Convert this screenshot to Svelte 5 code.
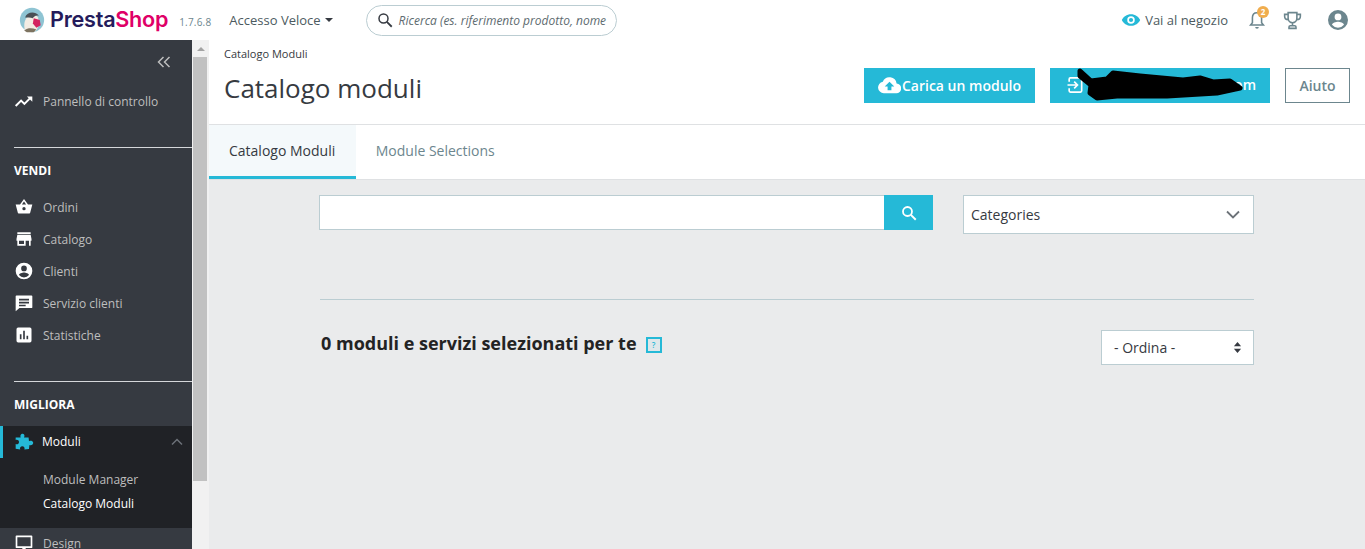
<script>
  const vendi = [
    { label: 'Ordini', icon: 'M12 2.500 7.200 9H2l2.600 10a1 1 0 0 0 1 .8h12.800a1 1 0 0 0 1-.8L22 9h-5.200zM9.500 9 12 5.300 14.500 9zM12 16a2 2 0 1 1 0-4 2 2 0 0 1 0 4z' },
    { label: 'Catalogo', icon: 'M4 4h16v2H4zM3 14v-2l1-5h16l1 5v2h-1v6H4v-6zm3 0v4h6v-4zm8 0v6h4v-6z' },
    { label: 'Clienti', icon: 'M12 2a10 10 0 1 0 0 20 10 10 0 0 0 0-20zm0 3.500a3.400 3.400 0 1 1 0 6.800 3.400 3.400 0 0 1 0-6.800zm0 14.200a7.700 7.700 0 0 1-6-2.900c.1-2 4-3.100 6-3.100s5.900 1.100 6 3.100a7.700 7.700 0 0 1-6 2.900z' },
    { label: 'Servizio clienti', icon: 'M3 3h18a1 1 0 0 1 1 1v13a1 1 0 0 1-1 1H6.500L2 22V4a1 1 0 0 1 1-1zm3 4v2h12V7zm0 3.500v2h12v-2zM6 14v2h8v-2z' },
    { label: 'Statistiche', icon: 'M5 3h14a2 2 0 0 1 2 2v14a2 2 0 0 1-2 2H5a2 2 0 0 1-2-2V5a2 2 0 0 1 2-2zm2 8v6h2v-6zm4-4v10h2V7zm4 6v4h2v-4z' }
  ];
</script>

<div class="page">
  <header class="topbar">
    <div class="logo">
      <svg class="bird" viewBox="0 0 30 30" width="26" height="26" aria-hidden="true">
        <circle cx="15" cy="15" r="14" fill="#8fc4d3" />
        <path d="M7 28c-2-8-1-15 5-18 4-2 8-1 10 2l1 6c0 4-2 8-4 10z" fill="#f3ece3" />
        <path d="M7 12c2-6 11-8 16-2-4-1-6 1-7 3-3-1-6-1-9-1z" fill="#4a4f55" />
        <path d="M17 13l7 2 1 6-5 3-4-5z" fill="#d3235f" />
        <path d="M6 27c4-3 9-3 14-1l-3 3h-8z" fill="#7d7360" />
      </svg>
      <span class="wordmark"><span class="presta">Presta</span><span class="shop">Shop</span></span>
    </div>
    <span class="version">1.7.6.8</span>
    <span class="quick">Accesso Veloce <i class="caret"></i></span>
    <div class="search">
      <svg viewBox="0 0 24 24" width="18" height="18" aria-hidden="true"><circle cx="10" cy="10" r="6" fill="none" stroke="#363a41" stroke-width="2" /><path d="M14.500 14.500 21 21" stroke="#363a41" stroke-width="2.400" /></svg>
      <span class="search-text">Ricerca (es. riferimento prodotto, nome</span>
    </div>
    <div class="top-right">
      <svg class="eye" viewBox="0 0 24 24" width="20" height="20" aria-hidden="true"><path fill="#25b9d7" d="M12 5C7 5 2.700 8.100 1 12c1.700 3.900 6 7 11 7s9.300-3.100 11-7c-1.700-3.900-6-7-11-7zm0 11.500a4.500 4.500 0 1 1 0-9 4.500 4.500 0 0 1 0 9zm0-7a2.500 2.500 0 1 0 0 5 2.500 2.500 0 0 0 0-5z" /></svg>
      <span class="shop-link">Vai al negozio</span>
      <span class="bell">
        <svg viewBox="0 0 24 24" width="22" height="22" aria-hidden="true"><path fill="none" stroke="#6c868e" stroke-width="1.700" d="M12 4c-3.400 0-5 2.600-5 5.500V15l-2 2.500h14L17 15V9.500C17 6.600 15.400 4 12 4z" /><path fill="#6c868e" d="M10 19.500h4a2 2 0 0 1-4 0z" /></svg>
        <span class="badge">2</span>
      </span>
      <svg class="trophy" viewBox="0 0 24 24" width="21" height="21" aria-hidden="true"><path fill="none" stroke="#6c868e" stroke-width="1.800" d="M7 3h10v6.500a5 5 0 0 1-10 0zM7 5H3v2c0 2.500 1.800 4 4.300 4.200M17 5h4v2c0 2.500-1.800 4-4.300 4.200M12 14.500V18M8 21v-1.500a1.500 1.500 0 0 1 1.500-1.500h5a1.500 1.500 0 0 1 1.500 1.500V21z" /></svg>
      <svg class="user" viewBox="0 0 24 24" width="24" height="24" aria-hidden="true"><path fill="#6c868e" d="M12 2a10 10 0 1 0 0 20 10 10 0 0 0 0-20zm0 3.500a3.400 3.400 0 1 1 0 6.800 3.400 3.400 0 0 1 0-6.800zm0 14.200a7.700 7.700 0 0 1-6-2.900c.1-2 4-3.100 6-3.100s5.900 1.100 6 3.100a7.700 7.700 0 0 1-6 2.900z" /></svg>
    </div>
  </header>

  <div class="body">
    <nav class="sidebar">
      <div class="collapse">
        <svg viewBox="0 0 14 12" width="14" height="12" aria-hidden="true"><path d="M6.500 1 1.500 6l5 5M12.500 1l-5 5 5 5" fill="none" stroke="#bebebe" stroke-width="1.500" /></svg>
      </div>
      <div class="item dash">
        <svg viewBox="0 0 24 24" width="20" height="20" aria-hidden="true"><path d="M2 18l6.500-6.500 4 4L20 8" fill="none" stroke="#fff" stroke-width="2.400" /><path d="M15.500 6.500H22V13z" fill="#fff" /></svg>
        <span>Pannello di controllo</span>
      </div>
      <div class="rule first"></div>
      <div class="heading">VENDI</div>
      {#each vendi as v}
        <div class="item">
          <svg viewBox="0 0 24 24" width="20" height="20" aria-hidden="true"><path fill="#fff" fill-rule="evenodd" d={v.icon} /></svg>
          <span>{v.label}</span>
        </div>
      {/each}
      <div class="rule second"></div>
      <div class="heading">MIGLIORA</div>
      <div class="active">
        <div class="active-row">
          <svg viewBox="0 0 24 24" width="20" height="20" aria-hidden="true"><path fill="#25b9d7" d="M9 2.500c2-1 4 .5 3.500 2.500-.1.500-.5 1-.5 1.500h5.500l.5 4.500c1.800-1 4.500-.5 5 1.500.5 2.500-2.500 4-4.500 3l-.5 5-5.500.5c.8-2-.5-4-2.500-4s-3.500 2-2.500 4L2 20v-5.500c2 1 4-.5 4-2.500s-2-3-4-2.500V6.500h6C7.500 5 7.500 3.300 9 2.500z" /></svg>
          <span class="mod">Moduli</span>
          <svg class="up" viewBox="0 0 12 8" width="12" height="8" aria-hidden="true"><path d="M1 6.500l5-5 5 5" fill="none" stroke="#6c7278" stroke-width="1.500" /></svg>
        </div>
        <div class="sub">Module Manager</div>
        <div class="sub on">Catalogo Moduli</div>
      </div>
      <div class="item design">
        <svg viewBox="0 0 24 24" width="20" height="20" aria-hidden="true"><path fill="#fff" fill-rule="evenodd" d="M3 3h18a1 1 0 0 1 1 1v13a1 1 0 0 1-1 1h-7v2h2v2H8v-2h2v-2H3a1 1 0 0 1-1-1V4a1 1 0 0 1 1-1zm1 2v11h16V5z" /></svg>
        <span>Design</span>
      </div>
    </nav>

    <div class="scrollbar">
      <i class="arrow"></i>
      <div class="thumb"></div>
    </div>

    <main class="main">
      <section class="head">
        <div class="crumb">Catalogo Moduli</div>
        <div class="title-row">
          <h1>Catalogo moduli</h1>
          <div class="actions">
            <button class="btn upload">
              <svg viewBox="0 0 24 24" width="23" height="23" aria-hidden="true"><path fill="#fff" fill-rule="evenodd" d="M19.400 10A7.500 7.500 0 0 0 5 8.100 6 6 0 0 0 6 20h13a5 5 0 0 0 .4-10zM14 13v4h-4v-4H7l5-5 5 5z" /></svg>
              Carica un modulo
            </button>
            <button class="btn connect">
              <svg viewBox="0 0 24 24" width="20" height="20" aria-hidden="true"><path fill="none" stroke="#fff" stroke-width="2" d="M5 8V5a1.500 1.500 0 0 1 1.500-1.500h12A1.500 1.500 0 0 1 20 5v14a1.500 1.500 0 0 1-1.500 1.500h-12A1.500 1.500 0 0 1 5 19v-3M3 12h11M11 8l4 4-4 4" /></svg>
              <span class="tail">om</span>
              <svg class="scribble" viewBox="0 0 170 36" width="170" height="36" aria-hidden="true"><path d="M3 3 14 13 30 11 36 5 63 8 106 12 123 10 136 14 153 13 163 20 140 25 90 28 40 28 20 30 13 25 14 17 3 8z" fill="#000" stroke="#000" stroke-width="5" stroke-linejoin="round" /></svg>
            </button>
            <button class="btn help">Aiuto</button>
          </div>
        </div>
      </section>

      <div class="tabs">
        <div class="tab current">Catalogo Moduli</div>
        <div class="tab">Module Selections</div>
      </div>

      <section class="content">
        <div class="filters">
          <div class="searchbox">
            <div class="field"></div>
            <div class="go">
              <svg viewBox="0 0 24 24" width="18" height="18" aria-hidden="true"><circle cx="10" cy="10" r="6" fill="none" stroke="#fff" stroke-width="2.400" /><path d="M14.500 14.500 21 21" stroke="#fff" stroke-width="2.600" /></svg>
            </div>
          </div>
          <div class="cat">
            <span>Categories</span>
            <svg viewBox="0 0 14 9" width="14" height="9" aria-hidden="true"><path d="M1 1.500l6 6 6-6" fill="none" stroke="#6c7278" stroke-width="1.800" /></svg>
          </div>
        </div>
        <div class="divider"></div>
        <div class="results">
          <h2>0 moduli e servizi selezionati per te</h2>
          <span class="qm">?</span>
          <div class="sort">
            <span>- Ordina -</span>
            <svg viewBox="0 0 10 14" width="9" height="13" aria-hidden="true"><path d="M5 1l4 4.500H1zM5 13 1 8.500h8z" fill="#363a41" /></svg>
          </div>
        </div>
      </section>
    </main>
  </div>
</div>

<style>
  :global(body) { margin: 0; overflow: hidden; background: #fff; }
  .page { height: 549px; width: 1365px; overflow: hidden; font-family: "Open Sans", sans-serif; color: #363a41; display: flex; flex-direction: column; }
  .topbar { height: 40px; flex: none; display: flex; align-items: center; background: #fff; }
  .logo { display: flex; align-items: center; margin-left: 19px; }
  .bird { margin-right: 5px; }
  .wordmark { font-family: Inter, sans-serif; font-weight: 600; font-size: 21.600px; letter-spacing: -.25px; line-height: 1; }
  .presta { color: #251b5b; }
  .shop { color: #df0067; }
  .version { font-size: 10px; color: #6c868e; margin-left: 11px; margin-top: 3px; letter-spacing: .2px; }
  .quick { font-size: 13px; color: #4c5a60; margin-left: 18px; display: flex; align-items: center; gap: 4px; }
  .caret { width: 0; height: 0; border: 4.500px solid transparent; border-top-color: #363a41; border-bottom: 0; }
  .search { margin-left: 33px; width: 251px; height: 31px; box-sizing: border-box; border: 1px solid #bbcdd2; border-radius: 16px; display: flex; align-items: center; padding-left: 9px; gap: 5px; overflow: hidden; }
  .search-text { font-size: 12px; font-style: italic; color: #5e6b70; white-space: nowrap; }
  .top-right { margin-left: auto; display: flex; align-items: center; position: relative; padding-right: 15px; }
  .shop-link { font-size: 13px; color: #4c5a60; margin-left: 4px; }
  .bell { position: relative; display: flex; margin-left: 18px; }
  .badge { position: absolute; left: 11px; top: -3px; width: 12px; height: 12px; border-radius: 50%; background: #f0ad4e; color: #fff; font-size: 8px; font-weight: 700; line-height: 12px; text-align: center; }
  .trophy { margin-left: 14px; }
  .user { margin-left: 23px; }

  .body { flex: 1; display: flex; min-height: 0; }
  .sidebar { width: 192px; flex: none; background: #363a41; color: #bebebe; overflow: hidden; display: flex; flex-direction: column; }
  .collapse { height: 44px; flex: none; display: flex; justify-content: flex-end; align-items: center; padding: 0 21px 0 0; }
  .item { height: 32px; flex: none; display: flex; align-items: center; font-size: 12px; padding-left: 14px; gap: 9px; }
  .dash { margin-top: 1px; }
  .rule { height: 1px; background: #d5d7da; margin-left: 14px; flex: none; }
  .rule.first { margin-top: 30px; }
  .rule.second { margin-top: 30px; }
  .heading { font-size: 12px; font-weight: 700; color: #fff; padding-left: 14px; height: 16px; line-height: 16px; margin-top: 15px; margin-bottom: 12px; flex: none; }
  .rule.second + .heading { margin-top: 15px; margin-bottom: 14px; }
  .active { background: #202226; height: 102px; flex: none; margin-top: -1px; position: relative; }
  .active-row { height: 32px; display: flex; align-items: center; gap: 8px; border-left: 3px solid #25b9d7; padding-left: 11px; padding-bottom: 1px; box-sizing: border-box; margin-bottom: 10px; }
  .mod { color: #fff; font-size: 12px; }
  .up { margin-left: auto; margin-right: 9px; }
  .sub { font-size: 12px; height: 24px; line-height: 24px; padding-left: 43px; color: #bebebe; }
  .sub.on { color: #fff; }
  .design { margin-top: -1px; }

  .scrollbar { width: 17px; flex: none; background: #f1f1f1; position: relative; }
  .arrow { position: absolute; left: 5px; top: 7px; width: 0; height: 0; border: 4px solid transparent; border-bottom-color: #a3a3a3; border-top: 0; }
  .thumb { position: absolute; top: 17px; left: 1px; width: 14px; height: 424px; background: #c1c1c1; }

  .main { flex: 1; min-width: 0; background: #eaebec; display: flex; flex-direction: column; }
  .head { height: 84px; flex: none; background: #fff; border-bottom: 1px solid #dfe1e3; padding: 0 15px; }
  .crumb { font-size: 11px; color: #363a41; padding-top: 6px; line-height: 15px; }
  .title-row { display: flex; align-items: flex-start; justify-content: space-between; padding-top: 7px; }
  h1 { margin: 2px 0 0; font-weight: 400; font-size: 26px; line-height: 36px; color: #363a41; }
  .actions { display: flex; gap: 15px; }
  .btn { font-family: inherit; height: 35px; border: 0; padding: 0 0 1px; display: flex; align-items: center; justify-content: center; font-size: 14px; font-weight: 600; color: #fff; background: #25b9d7; position: relative; box-sizing: border-box; line-height: 21px; }
  .upload { width: 171px; gap: 1px; }
  .connect { width: 220px; justify-content: flex-start; padding-left: 15px; }
  .tail { position: absolute; right: 14px; top: 6px; }
  .scribble { position: absolute; left: 27px; top: 0; }
  .help { width: 65px; background: #fff; border: 1px solid #6c868e; color: #6c868e; }

  .tabs { height: 55px; flex: none; background: #fff; display: flex; border-bottom: 1px solid #dfe1e3; box-sizing: border-box; }
  .tab { font-size: 14px; color: #6c868e; padding: 0 20px; display: flex; align-items: center; box-sizing: border-box; height: 54px; border-bottom: 3px solid transparent; }
  .tab.current { color: #363a41; border-bottom-color: #25b9d7; background: #f4f9fb; padding-right: 20.500px; }

  .content { flex: 1; padding: 15px 111px 0 110px; }
  .filters { display: flex; justify-content: space-between; align-items: flex-start; }
  .searchbox { display: flex; width: 614px; height: 35px; }
  .field { flex: 1; background: #fff; border: 1px solid #bbcdd2; border-right: 0; }
  .go { width: 49px; background: #25b9d7; display: flex; align-items: center; justify-content: center; }
  .cat { width: 291px; height: 39px; box-sizing: border-box; background: #fff; border: 1px solid #bbcdd2; display: flex; align-items: center; justify-content: space-between; padding: 0 13px 0 7px; font-size: 14px; color: #363a41; }
  .divider { height: 1px; background: #bbcdd2; margin: 65px 0 0 1px; }
  .results { display: flex; align-items: flex-start; margin-top: 30px; }
  h2 { margin: 0 0 0 2px; font-size: 18px; font-weight: 700; color: #232323; line-height: 26px; }
  .qm { width: 12px; height: 12px; margin: 7px 0 0 9px; border: 2px solid #25b9d7; background: #dfe7ea; font-size: 8px; line-height: 12px; text-align: center; color: #25b9d7; font-weight: 600; }
  .sort { margin-left: auto; width: 153px; height: 35px; box-sizing: border-box; background: #fff; border: 1px solid #bbcdd2; display: flex; align-items: center; justify-content: space-between; padding: 0 11px 0 12px; font-size: 14px; color: #363a41; }
</style>
